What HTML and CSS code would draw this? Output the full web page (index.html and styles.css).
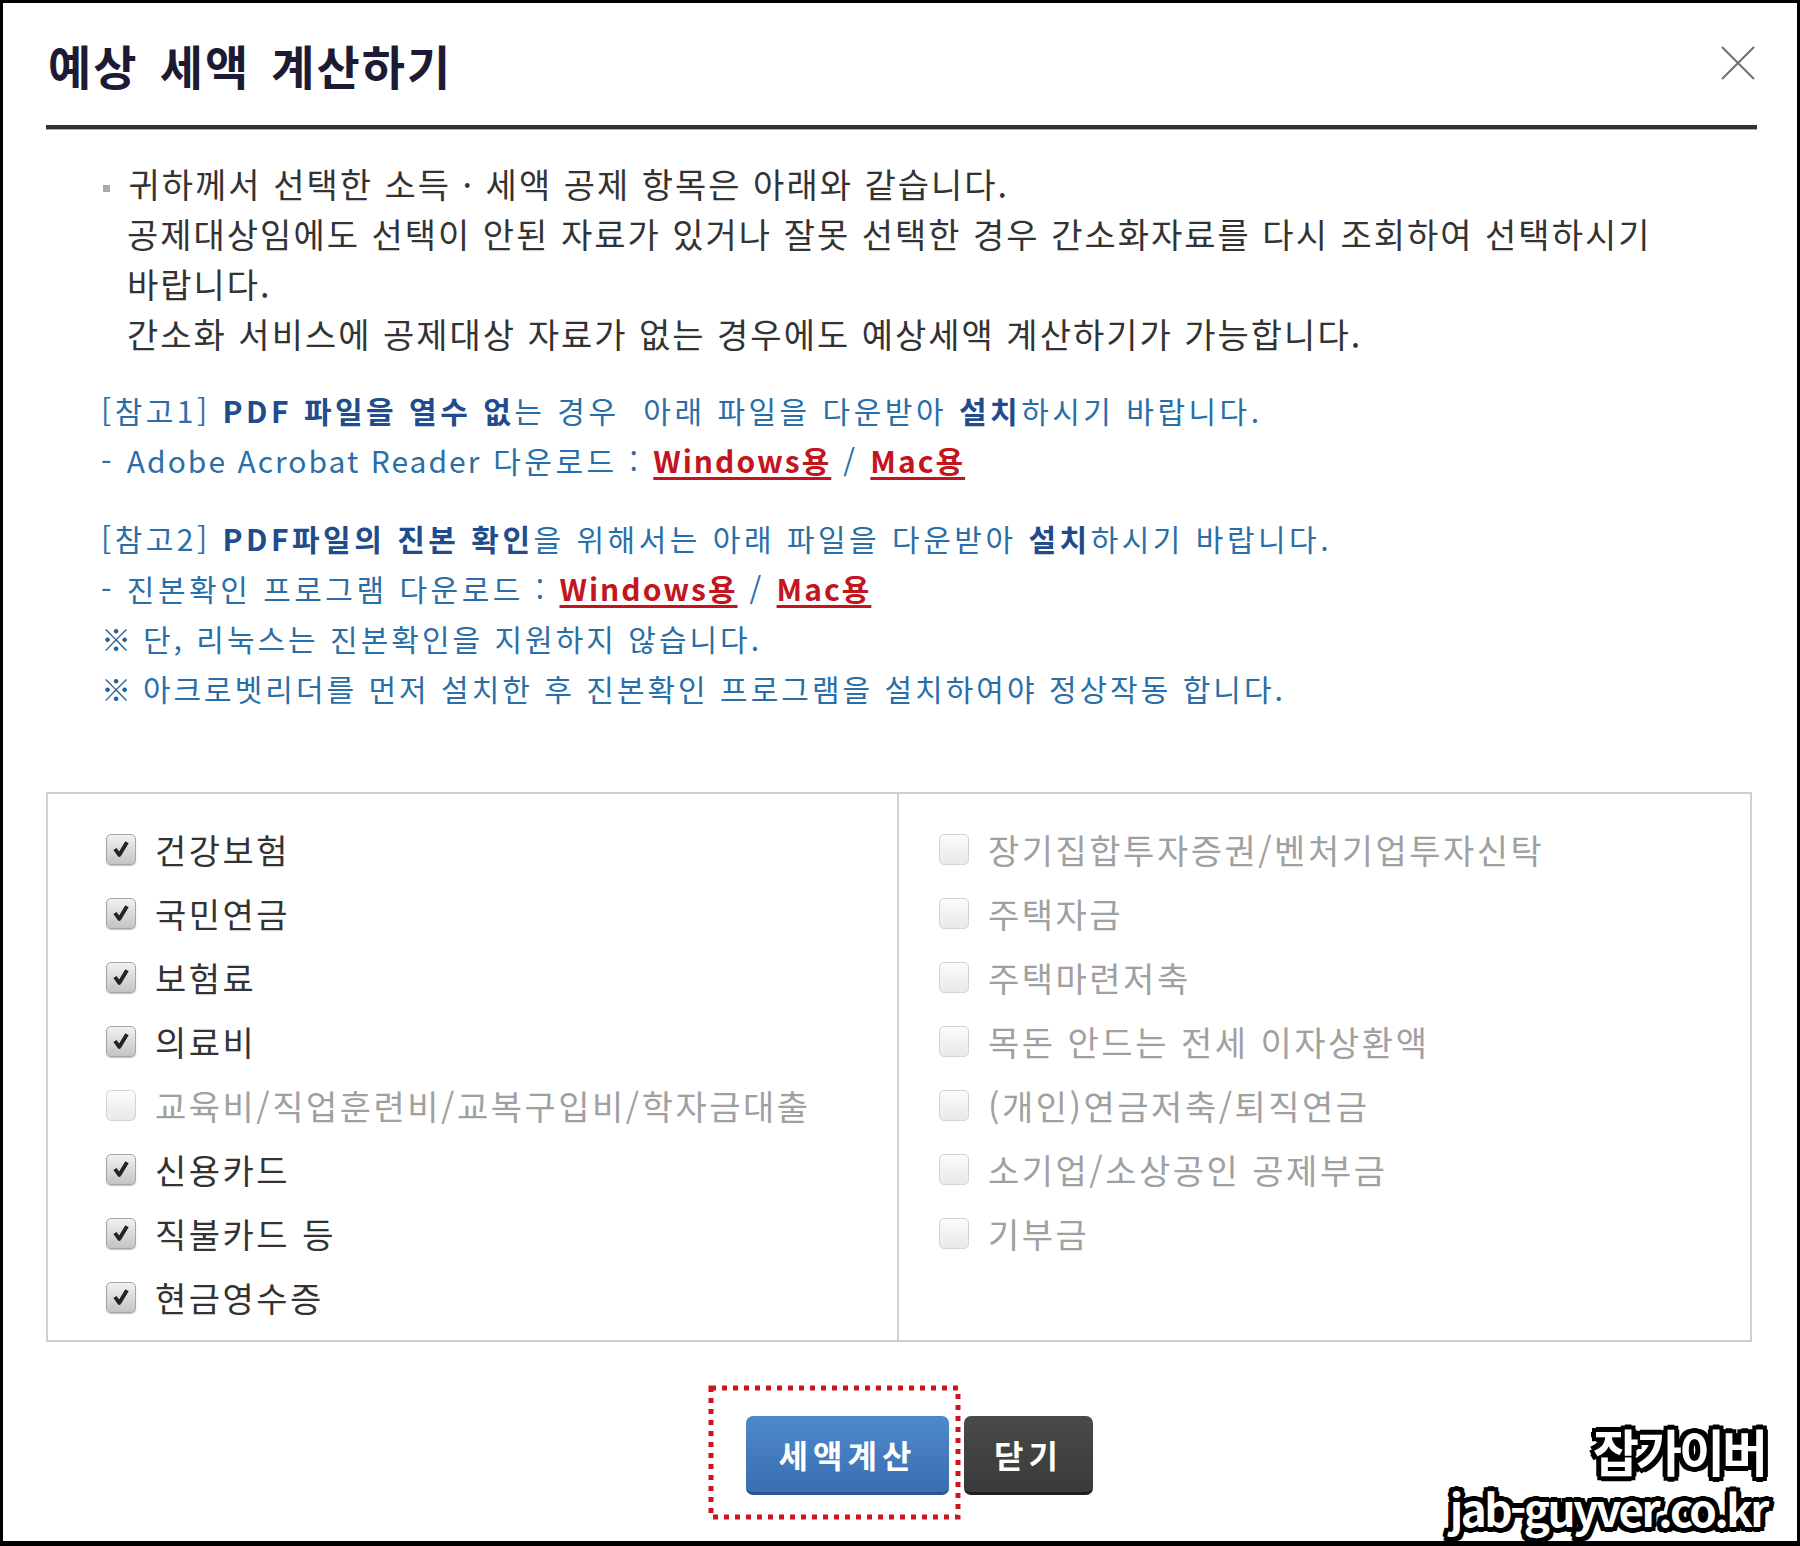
FILE: index.html
```html
<!DOCTYPE html>
<html lang="ko">
<head>
    <meta charset="UTF-8">
    <meta name="viewport" content="width=device-width, initial-scale=1.0">
    <title>예상 세액 계산하기</title>
    <link rel="stylesheet" href="styles.css">
</head>
<body>

    <div class="frame">
        <div class="dialog">
            <div class="dlg-head">
                <h1>예상 세액 계산하기</h1>
                <button class="close" aria-label="닫기">
                    <svg width="36" height="36" viewBox="0 0 36 36">
                        <path d="M2 2 L34 34 M34 2 L2 34" stroke="#6b6f7a" stroke-width="2" fill="none"/>
                    </svg>
                </button>
            </div>

            <p class="intro">
                귀하께서 선택한 소득 · 세액 공제 항목은 아래와 같습니다.<br>
                공제대상임에도 선택이 안된 자료가 있거나 잘못 선택한 경우 간소화자료를 다시 조회하여 선택하시기<br>
                바랍니다.<br>
                간소화 서비스에 공제대상 자료가 없는 경우에도 예상세액 계산하기가 가능합니다.
            </p>

            <div class="notes">
                <p>
                    [참고1] <b>PDF 파일을 열수 없</b>는 경우&nbsp; 아래 파일을 다운받아 <b>설치</b>하시기 바랍니다.<br>
                    - <span class="en">Adobe Acrobat Reader</span> 다운로드 : <a href="#">Windows용</a> / <a href="#">Mac용</a>
                </p>
                <p>
                    [참고2] <b>PDF파일의 진본 확인</b>을 위해서는 아래 파일을 다운받아 <b>설치</b>하시기 바랍니다.<br>
                    - 진본확인 프로그램 다운로드 : <a href="#">Windows용</a> / <a href="#">Mac용</a><br>
                    <span class="kome">※</span> <span class="tight">단, 리눅스는 진본확인을 지원하지 않습니다.</span><br>
                    <span class="kome">※</span> <span class="tight">아크로벳리더를 먼저 설치한 후 진본확인 프로그램을 설치하여야 정상작동 합니다.</span>
                </p>
            </div>

            <div class="deduct">
                <ul class="col col-left">
                    <li class="on"><span class="box"></span>건강보험</li>
                    <li class="on"><span class="box"></span>국민연금</li>
                    <li class="on"><span class="box"></span>보험료</li>
                    <li class="on"><span class="box"></span>의료비</li>
                    <li><span class="box"></span>교육비/직업훈련비/교복구입비/학자금대출</li>
                    <li class="on"><span class="box"></span>신용카드</li>
                    <li class="on"><span class="box"></span>직불카드 등</li>
                    <li class="on"><span class="box"></span>현금영수증</li>
                </ul>
                <ul class="col col-right">
                    <li><span class="box"></span>장기집합투자증권/벤처기업투자신탁</li>
                    <li><span class="box"></span>주택자금</li>
                    <li><span class="box"></span>주택마련저축</li>
                    <li><span class="box"></span>목돈 안드는 전세 이자상환액</li>
                    <li><span class="box"></span>(개인)연금저축/퇴직연금</li>
                    <li><span class="box"></span>소기업/소상공인 공제부금</li>
                    <li><span class="box"></span>기부금</li>
                </ul>
            </div>

            <div class="actions">
                <div class="hl">
                    <button class="btn btn-blue">세액계산</button>
                    <svg class="mark" width="253" height="135" viewBox="0 0 253 135">
                        <rect x="3" y="3" width="247" height="129" fill="none" stroke="#d0141c" stroke-width="5" stroke-dasharray="5 6"/>
                    </svg>
                </div>
                <button class="btn btn-dark">닫기</button>
            </div>
        </div>

        <div class="watermark">
            <div class="wm-ko">잡가이버</div>
            <div class="wm-en">jab-guyver.co.kr</div>
        </div>
    </div>

</body>
</html>
```

FILE: styles.css
```css
/* Page frame with the black edge of the screenshot */
body {
    margin: 0;
    background: #fff;
    font-family: "Noto Sans CJK KR", "Noto Sans", sans-serif;
    color: #333;
}

.frame {
    position: relative;
    width: 1800px;
    height: 1546px;
    box-sizing: border-box;
    border: 3px solid #000;
    border-bottom-width: 5px;
    background: #fff;
    overflow: hidden;
}

.dialog {
    padding: 0 40px 0 43px;
}

/* Title bar */
.dlg-head {
    display: flex;
    justify-content: space-between;
    align-items: center;
    height: 122px;
    border-bottom: 4px solid #333;
    box-shadow: 0 1px 0 #aaa;
}

.dlg-head h1 {
    margin: 0 0 0 2px;
    font-size: 47px;
    font-weight: bold;
    letter-spacing: 2px;
    word-spacing: 6px;
    color: #1d1b34;
}

.close {
    background: none;
    border: none;
    padding: 0;
    margin-right: 1px;
    margin-bottom: 2px;
    cursor: pointer;
}

.close svg {
    display: block;
}

/* Intro text */
.intro {
    margin: 30px 0 0;
    padding-left: 81px;
    font-size: 34px;
    line-height: 50px;
    letter-spacing: 2px;
    color: #333;
}

.intro::before {
    content: "";
    display: inline-block;
    width: 7px;
    height: 7px;
    margin-left: -24px;
    margin-right: 7px;
    vertical-align: middle;
    background: #aaa;
}

/* Blue notes */
.notes {
    margin-top: 26px;
    padding-left: 55px;
    font-size: 30px;
    line-height: 50px;
    letter-spacing: 3.5px;
    color: #2a6ea8;
}

.notes p {
    margin: 0 0 28px;
}

.notes p:last-child {
    margin-bottom: 0;
}

.notes b {
    color: #1f4c8c;
}

.notes .en {
    letter-spacing: 2px;
}

.notes .tight {
    letter-spacing: 3px;
}

.notes a {
    color: #c4141e;
    font-weight: bold;
    letter-spacing: 2px;
    text-decoration: underline;
    text-underline-offset: 4px;
}

.kome {
    display: inline-block;
    width: 30px;
    font-weight: bold;
    color: #1f5f9a;
}

/* Deduction checklist */
.deduct {
    display: grid;
    grid-template-columns: 1fr 1fr;
    margin: 79px 5px 0 0;
    border: 2px solid #cfcfcf;
}

.col {
    list-style: none;
    margin: 0;
    padding: 23px 0 11px;
}

.col-left {
    padding-left: 58px;
    border-right: 2px solid #cfcfcf;
}

.col-right {
    padding-left: 40px;
}

.col li {
    display: flex;
    align-items: center;
    height: 64px;
    font-size: 34px;
    letter-spacing: 2.5px;
    color: #a0a0a0;
}

.col li.on {
    color: #333;
}

.box {
    flex: none;
    width: 30px;
    height: 31px;
    margin-right: 19px;
    box-sizing: border-box;
    border: 1px solid #d4d4d4;
    border-radius: 5px;
    background: linear-gradient(#fbfbfb, #e9e9e9);
}

.on .box {
    border-color: #a6a6a6;
    background:
        url("data:image/svg+xml;utf8,<svg xmlns='http://www.w3.org/2000/svg' width='28' height='28'><path d='M7 14 L12 21 L21 6' stroke='%23222' stroke-width='4.5' fill='none' stroke-linejoin='round'/></svg>") center / 24px 24px no-repeat,
        linear-gradient(#f2f2f2, #c4c4c4);
    box-shadow: 0 1px 1px rgba(0, 0, 0, 0.25);
}

/* Buttons */
.actions {
    display: flex;
    justify-content: center;
    align-items: center;
    gap: 15px;
    margin-top: 74px;
    padding-left: 36px;
}

.hl {
    position: relative;
}

.btn {
    height: 79px;
    border: none;
    border-radius: 7px;
    color: #fff;
    font-family: inherit;
    font-size: 32px;
    font-weight: bold;
    letter-spacing: 5px;
    cursor: pointer;
}

.btn-blue {
    display: block;
    width: 203px;
    background: linear-gradient(#4d88cb, #3a6fb2);
    border-bottom: 3px solid #2c5590;
}

.btn-dark {
    width: 129px;
    background: linear-gradient(#4a4a4a, #3a3a3a);
    border-bottom: 3px solid #1e1e1e;
}

.mark {
    position: absolute;
    left: -38px;
    top: -31px;
}

/* Watermark */
.watermark {
    position: absolute;
    right: 30px;
    bottom: 4px;
    text-align: right;
    color: #fff;
    font-family: "Noto Sans CJK KR", "Noto Sans", sans-serif;
    font-weight: bold;
    text-shadow:
        3px 0 0 #000, -3px 0 0 #000, 0 3px 0 #000, 0 -3px 0 #000,
        2px 2px 0 #000, -2px 2px 0 #000, 2px -2px 0 #000, -2px -2px 0 #000,
        5px 0 0 #000, -5px 0 0 #000, 0 5px 0 #000, 0 -5px 0 #000,
        4px 4px 0 #000, -4px 4px 0 #000, 4px -4px 0 #000, -4px -4px 0 #000;
}

.wm-ko {
    font-size: 50px;
    line-height: 58px;
    letter-spacing: -3px;
    margin-right: 2px;
}

.wm-en {
    font-size: 44px;
    line-height: 58px;
    letter-spacing: -2.5px;
}
```
